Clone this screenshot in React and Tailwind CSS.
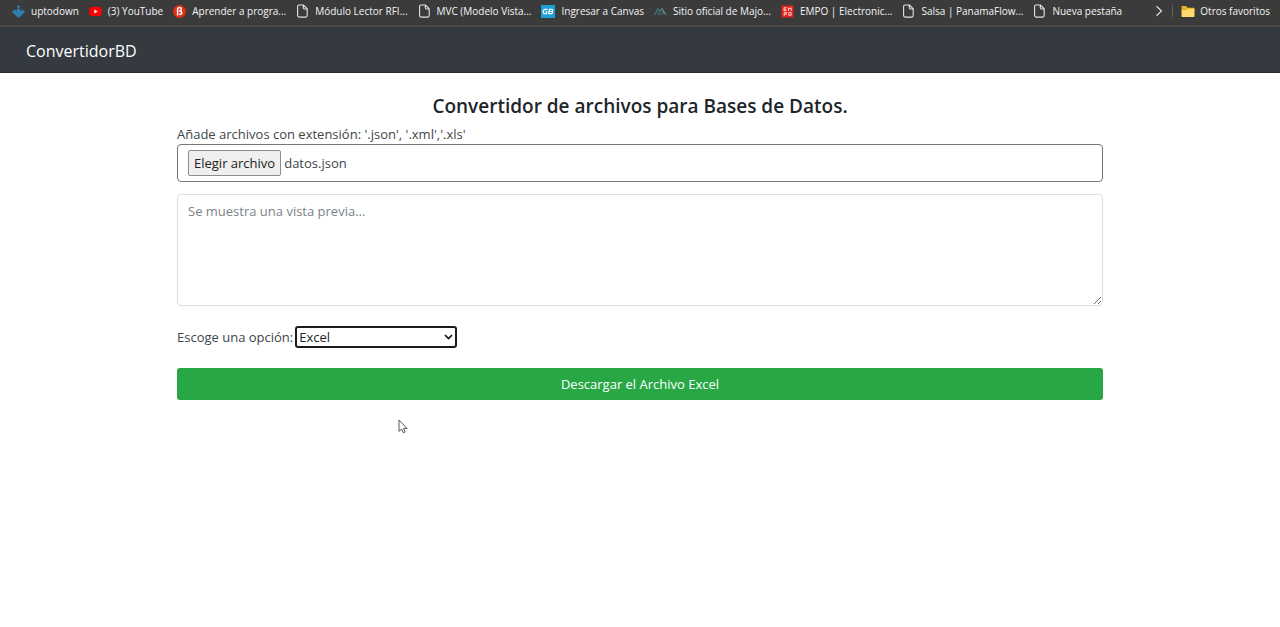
import { useRef, useState } from "react";

function UptodownIcon() {
  return (
    <svg viewBox="0 0 13 13" className="size-[13px] shrink-0" aria-hidden="true">
      <path d="M6.5 0 8.2 1.7 6.5 3.4 4.8 1.7Z" fill="#2f7fb5" />
      <path d="M4.8 3.8h3.4v2.4l2-1.6L13 6.9 6.5 13 0 6.9l2.8-2.3 2 1.6Z" fill="#2f7fb5" />
    </svg>
  );
}

function YouTubeIcon() {
  return (
    <svg viewBox="0 0 13 13" className="size-[13px] shrink-0" aria-hidden="true">
      <rect x="0.3" y="2" width="12.4" height="9" rx="2.4" fill="#f00" />
      <path d="M5.3 4.6 8.7 6.5 5.3 8.4Z" fill="#fff" />
    </svg>
  );
}

function BetaIcon() {
  return (
    <svg viewBox="0 0 13 13" className="size-[13px] shrink-0" aria-hidden="true">
      <circle cx="6.5" cy="6.5" r="6.5" fill="#e22d12" />
      <path
        d="M4.6 10.6V4.5c0-1.2.8-1.9 1.9-1.9s1.8.6 1.8 1.6c0 .9-.6 1.2-1.2 1.7 1 .2 1.7.8 1.7 1.8 0 1.2-.9 1.8-2.6 1.6"
        fill="none"
        stroke="#fff"
        strokeWidth="1.5"
      />
    </svg>
  );
}

function PageIcon() {
  return (
    <svg viewBox="0 0 13 14" className="h-[14px] w-[13px] shrink-0" aria-hidden="true">
      <path
        d="M3.2 1h4.3l3.7 3.8v6.7c0 1-.6 1.6-1.6 1.6H3.2c-1 0-1.6-.6-1.6-1.6V2.6C1.6 1.6 2.2 1 3.2 1ZM7.3 1.2v2.6c0 .8.4 1.2 1.2 1.2h2.5"
        fill="none"
        stroke="#e4e4e4"
        strokeWidth="1.1"
      />
    </svg>
  );
}

function CanvasIcon() {
  return (
    <svg viewBox="0 0 14 13" className="h-[13px] w-[14px] shrink-0" aria-hidden="true">
      <rect width="14" height="13" fill="#1ca0d8" />
      <path
        d="M6.5 4.4H4.2C3 4.4 2.3 5.2 2.2 6.5S2.7 8.7 3.7 8.7h1.7l.4-1.9H4.6M8.5 4.3 7.7 8.7h2.4c1.7 0 1.9-2 .4-2.2 1.6-.2 1.6-2.2.1-2.2ZM8.3 6.5h2.2"
        fill="none"
        stroke="#fff"
        strokeWidth="1.2"
      />
    </svg>
  );
}

function MajoIcon() {
  return (
    <svg viewBox="0 0 13 13" className="size-[13px] shrink-0" aria-hidden="true">
      <path d="M.6 10 4 3.4 7.3 10M3.4 7.6 4.6 10" fill="none" stroke="#4b8289" strokeWidth="1" />
      <path d="M6 6.2 8 3.4 12 10M8.4 5.8 10 9" fill="none" stroke="#5f99a0" strokeWidth="1" />
    </svg>
  );
}

function EmpoIcon() {
  return (
    <svg viewBox="0 0 13 13" className="size-[13px] shrink-0" aria-hidden="true">
      <rect x="0.5" y="0.5" width="12" height="12" rx="1" fill="#e3231b" />
      <path
        d="M5.7 2.7H3v3h2.7M3 4.2h2.3M7.5 6V2.7l1.3 1.4 1.4-1.4V6M3.2 10.8V7.6h2.3v1.7H3.2M7.7 7.6h2.5v2.7H7.7Z"
        fill="none"
        stroke="#ffd8d5"
        strokeWidth="0.9"
      />
    </svg>
  );
}

function FolderIcon() {
  return (
    <svg viewBox="0 0 14 13" className="h-[13px] w-[14px] shrink-0" aria-hidden="true">
      <path d="M.5 2c0-.6.4-1 1-1h3.6l1.6 1.7h5.8c.6 0 1 .4 1 1V6H.5Z" fill="#e9ad24" />
      <path d="M.5 5.3h4.6l1.6-1.5h5.8c.6 0 1 .4 1 1V11c0 .6-.4 1-1 1h-11c-.6 0-1-.4-1-1Z" fill="#ffd96b" />
    </svg>
  );
}

const bookmarks = [
  { label: "uptodown", Icon: UptodownIcon },
  { label: "(3) YouTube", Icon: YouTubeIcon },
  { label: "Aprender a progra...", Icon: BetaIcon },
  { label: "Módulo Lector RFI...", Icon: PageIcon },
  { label: "MVC (Modelo Vista...", Icon: PageIcon },
  { label: "Ingresar a Canvas", Icon: CanvasIcon },
  { label: "Sitio oficial de Majo...", Icon: MajoIcon },
  { label: "EMPO | Electronic...", Icon: EmpoIcon },
  { label: "Salsa | PanamaFlow...", Icon: PageIcon },
  { label: "Nueva pestaña", Icon: PageIcon },
];

function BookmarksBar() {
  return (
    <nav
      aria-label="Favoritos"
      className="flex items-center border-b-2 border-[#484848] bg-[#3b3b3b] pt-px pr-[10px] pb-1 pl-3 text-[10px] leading-5 text-gray-100"
    >
      <ul className="flex min-w-0 flex-1 gap-[10px] overflow-hidden whitespace-nowrap">
        {bookmarks.map(({ label, Icon }) => (
          <li key={label}>
            <a href="#" className="flex items-center gap-[6px]">
              <Icon />
              {label}
            </a>
          </li>
        ))}
      </ul>
      <button type="button" aria-label="Más favoritos" className="mr-2 flex shrink-0">
        <svg viewBox="0 0 10 12" className="h-3 w-[10px]" aria-hidden="true">
          <path d="M2.5 1.2 7.5 6l-5 4.8" fill="none" stroke="#dedede" strokeWidth="1.2" />
        </svg>
      </button>
      <a href="#" className="flex shrink-0 items-center gap-[5px]">
        <span className="mr-[3px] h-3 w-px bg-[#606060]" />
        <FolderIcon />
        Otros favoritos
      </a>
    </nav>
  );
}

function MousePointer() {
  return (
    <svg viewBox="0 0 10 15" className="absolute top-[419px] left-[398px] h-[15px] w-[10px]" aria-hidden="true">
      <path
        d="M1 1v11.4l2.6-2.3 1.7 3.7 1.8-.8-1.6-3.6H9Z"
        fill="#fff"
        stroke="#55555f"
        strokeWidth="1"
      />
    </svg>
  );
}

export default function App() {
  const fileInput = useRef(null);
  const [fileName, setFileName] = useState("datos.json");
  const [format, setFormat] = useState("Excel");

  return (
    <div className="relative min-h-screen bg-white font-['Open_Sans','Noto_Sans',sans-serif] text-[13px] leading-5 text-[#40454a]">
      <BookmarksBar />
      <header className="border-b border-[#2b2f33] bg-[#343a40] px-[26px] pt-[10px] pb-[7px]">
        <a href="#" className="text-base leading-7 text-white">
          ConvertidorBD
        </a>
      </header>

      <main className="mx-auto flex w-[926px] max-w-full flex-col pt-[19px]">
        <h1 className="text-center text-[19px] leading-7 font-semibold text-[#212529]">
          Convertidor de archivos para Bases de Datos.
        </h1>
        <label htmlFor="archivo" className="mt-1">
          Añade archivos con extensión: '.json', '.xml','.xls'
        </label>
        <div className="flex items-center gap-[3px] rounded border border-[#777] px-[10px] py-[5px]">
          <input
            id="archivo"
            ref={fileInput}
            type="file"
            accept=".json,.xml,.xls"
            className="sr-only"
            onChange={(e) => setFileName(e.target.files[0]?.name ?? "")}
          />
          <button
            type="button"
            onClick={() => fileInput.current.click()}
            className="rounded-xs border border-[#8c8c8c] bg-[#efefef] px-[5px] py-0.5 text-[#222]"
          >
            Elegir archivo
          </button>
          <span>{fileName}</span>
        </div>
        <textarea
          aria-label="Vista previa"
          placeholder="Se muestra una vista previa..."
          className="mt-3 h-28 rounded border border-[#d9dde1] px-[10px] py-[6px] placeholder:text-[#7b838a]"
        />
        <div className="mt-5 flex items-center gap-0.5">
          <label htmlFor="formato">Escoge una opción:</label>
          <div className="relative">
            <select
              id="formato"
              value={format}
              onChange={(e) => setFormat(e.target.value)}
              className="block h-[22px] w-[162px] appearance-none rounded-[3px] border-2 border-[#1c1c1c] bg-white px-0.5 leading-[18px] text-[#212529]"
            >
              <option>Excel</option>
              <option>JSON</option>
              <option>XML</option>
            </select>
            <svg
              viewBox="0 0 9 6"
              className="pointer-events-none absolute top-2 right-1 h-[6px] w-[9px]"
              aria-hidden="true"
            >
              <path d="M1 1l3.5 3.5L8 1" fill="none" stroke="#111" strokeWidth="1.6" />
            </svg>
          </div>
        </div>
        <button type="button" className="mt-5 rounded-[3px] bg-[#28a745] py-[6px] text-white">
          Descargar el Archivo {format}
        </button>
      </main>
      <MousePointer />
    </div>
  );
}
